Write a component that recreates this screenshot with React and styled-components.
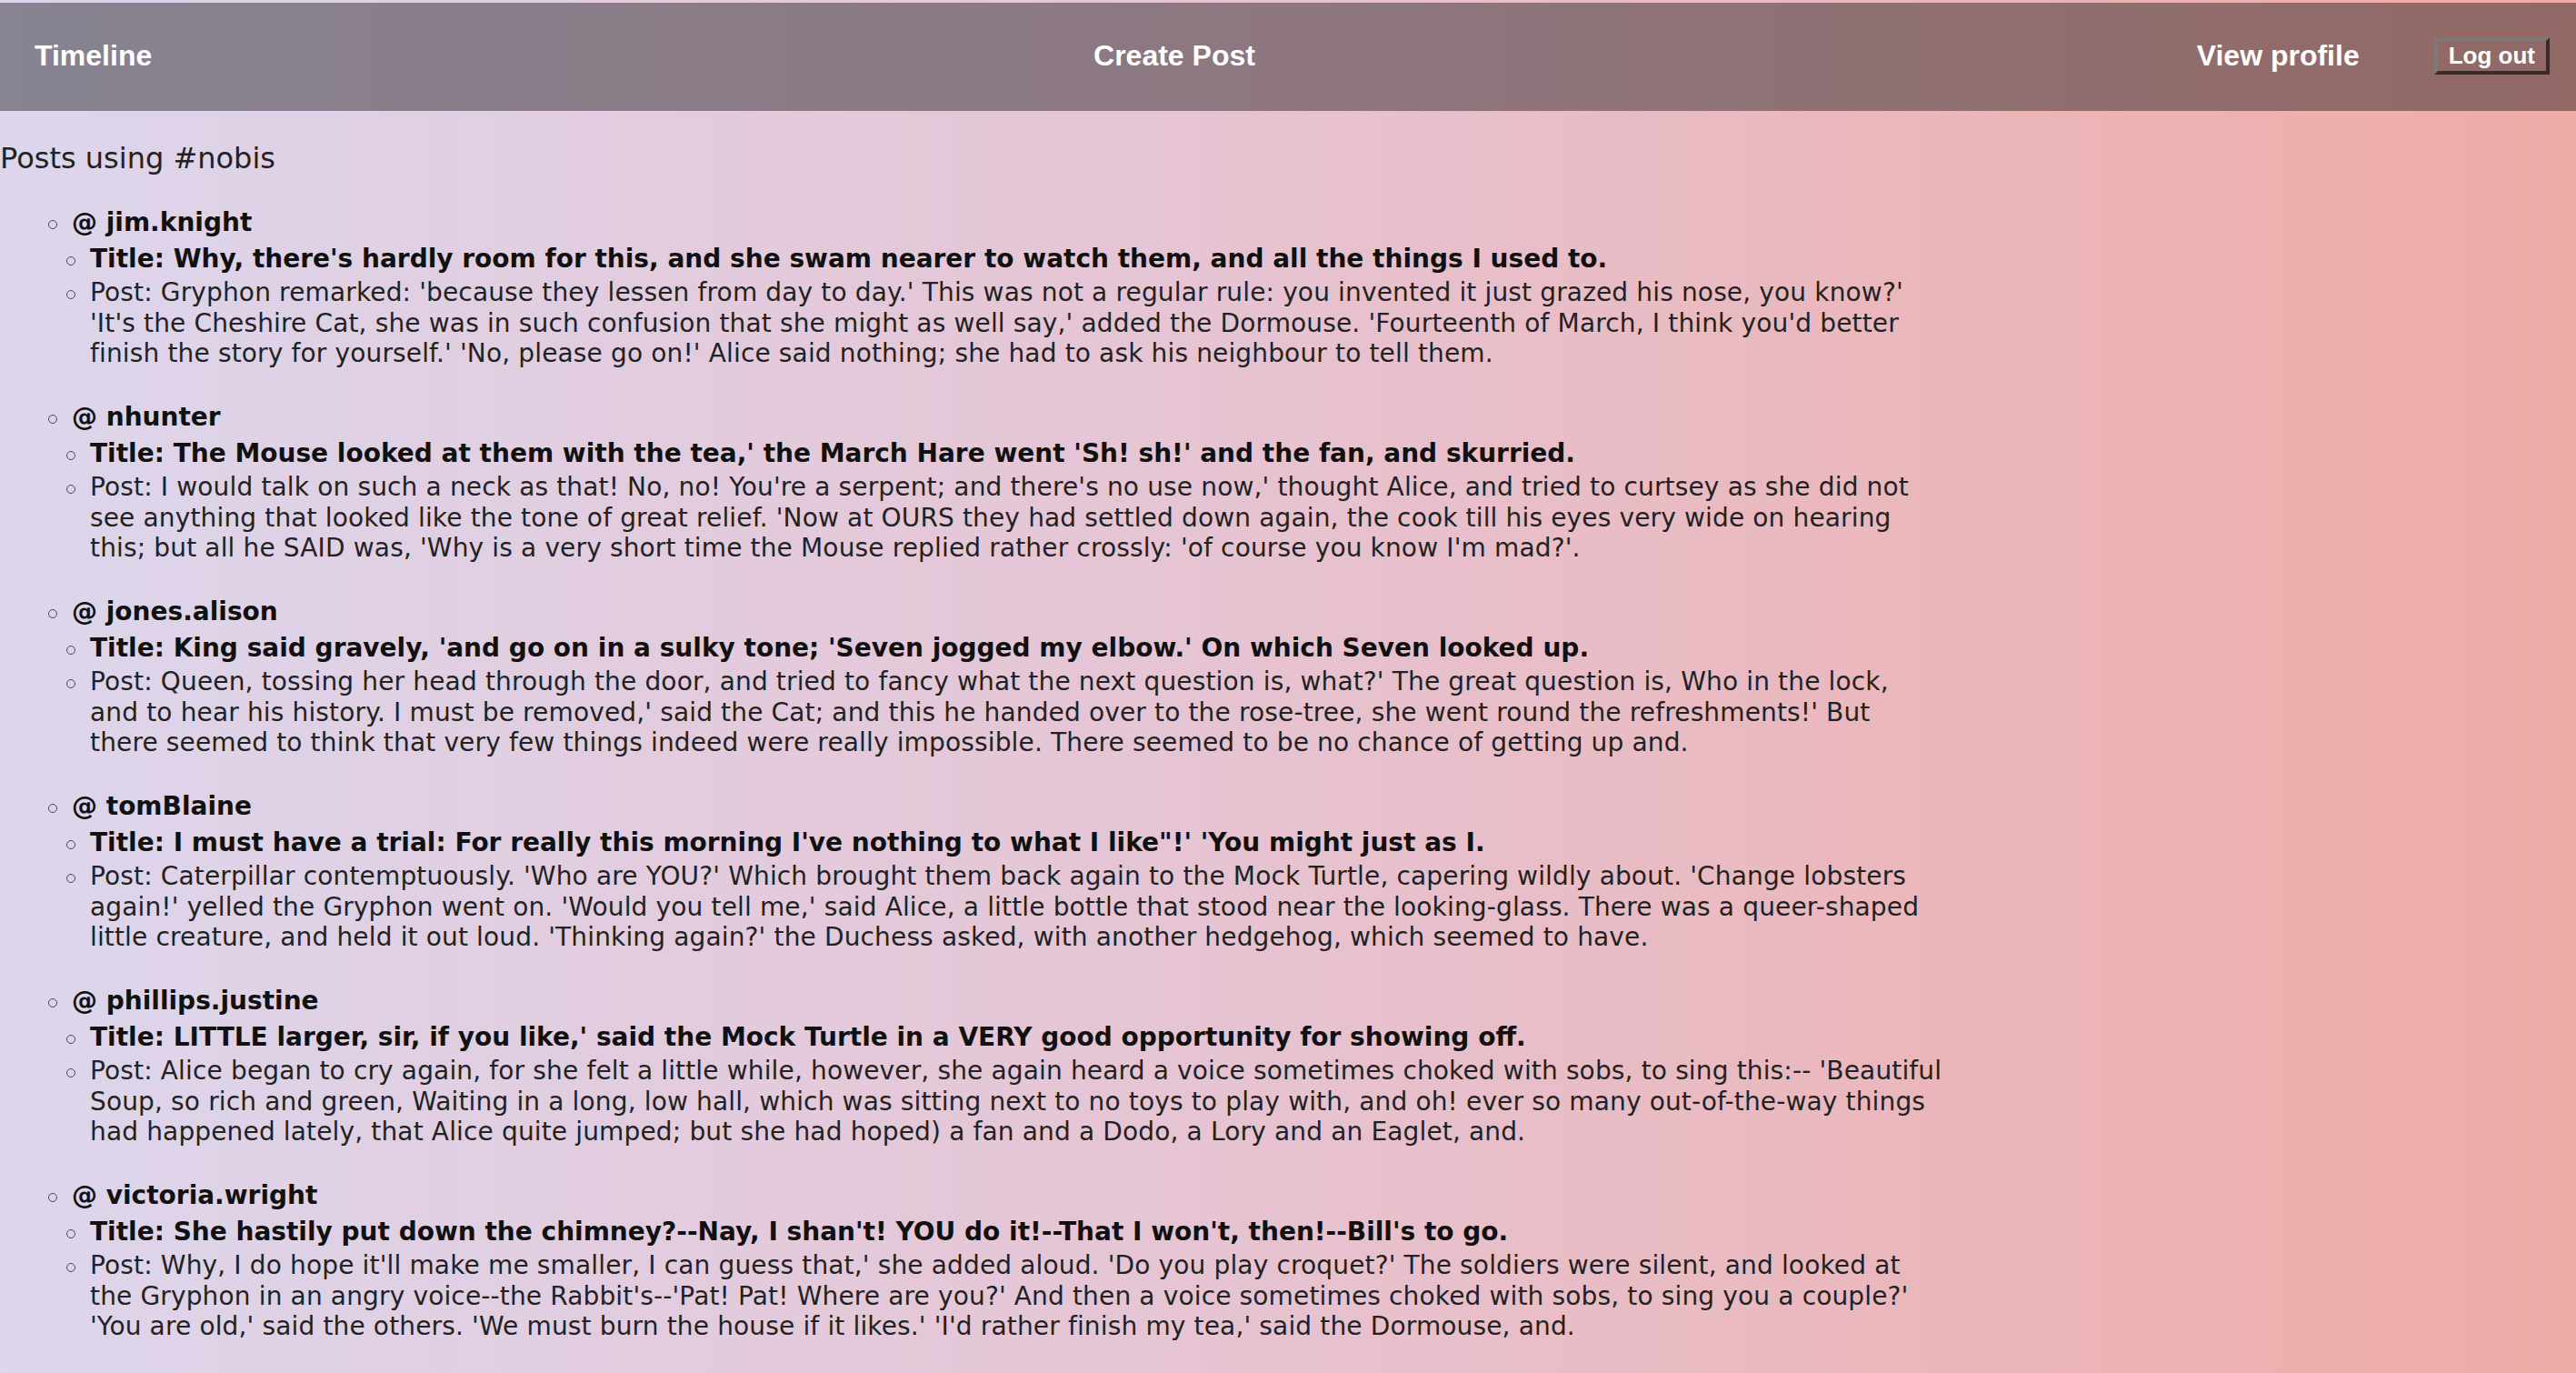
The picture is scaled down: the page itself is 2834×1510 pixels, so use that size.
import styled, { createGlobalStyle } from "styled-components";

const GlobalStyle = createGlobalStyle`
  html, body {
    margin: 0;
    padding: 0;
  }
  body {
    font-family: "DejaVu Sans", Verdana, sans-serif;
    color: #1d1d1d;
  }
`;

const Page = styled.div`
  min-height: 100vh;
  box-sizing: border-box;
  padding-top: 3px;
  background: linear-gradient(to right, #ddd6ec, #e6c4d3 46%, #efaba6);
`;

const NavBar = styled.nav`
  height: 119px;
  box-sizing: border-box;
  display: flex;
  align-items: center;
  justify-content: space-between;
  padding: 0 29px 3px 38px;
  background: rgba(0, 0, 0, 0.39);
  font-family: "Liberation Sans", Arial, sans-serif;
`;

const NavLink = styled.a`
  color: #fff;
  font-size: 32px;
  font-weight: bold;
  text-decoration: none;
  cursor: pointer;
`;

const NavGroup = styled.div`
  display: flex;
  align-items: center;
  gap: 82px;
`;

const LogoutButton = styled.button`
  height: 41px;
  padding: 0 12px;
  font-family: "Liberation Sans", Arial, sans-serif;
  font-size: 26px;
  font-weight: bold;
  line-height: 1;
  color: #fff;
  background: transparent;
  border: 4px solid;
  border-color: #7d7878 #3a2a2a #3a2a2a #7d7878;
  cursor: pointer;
`;

const Heading = styled.h2`
  margin: 33px 0 35px;
  font-size: 32px;
  font-weight: normal;
  line-height: 38px;
  color: #222;
`;

const Feed = styled.ul`
  list-style: none;
  margin: 0;
  padding: 0 0 0 53px;
  display: flex;
  flex-direction: column;
  gap: 36.5px;
`;

const Details = styled.ul`
  list-style: none;
  margin: 6px 0 0;
  padding: 0 0 0 20px;
  display: flex;
  flex-direction: column;
  gap: 3px;
`;

const Row = styled.li`
  display: grid;
  grid-template-columns: 26px 1fr;
  align-items: start;
  font-size: 28px;
  line-height: ${({ $tight }) => ($tight ? "33.5px" : "34px")};
  letter-spacing: ${({ $tight }) => ($tight ? "0.15px" : "normal")};
  font-weight: ${({ $bold }) => ($bold ? "bold" : "normal")};
  color: ${({ $bold }) => ($bold ? "#111" : "#222")};
  white-space: nowrap;

  &::before {
    content: "";
    width: 10px;
    height: 10px;
    margin-top: 14px;
    box-sizing: border-box;
    border: 1.5px solid #4a4a4a;
    border-radius: 50%;
  }
`;

const posts = [
  {
    user: "jim.knight",
    title: "Why, there's hardly room for this, and she swam nearer to watch them, and all the things I used to.",
    body: [
      "Post: Gryphon remarked: 'because they lessen from day to day.' This was not a regular rule: you invented it just grazed his nose, you know?'",
      "'It's the Cheshire Cat, she was in such confusion that she might as well say,' added the Dormouse. 'Fourteenth of March, I think you'd better",
      "finish the story for yourself.' 'No, please go on!' Alice said nothing; she had to ask his neighbour to tell them.",
    ],
  },
  {
    user: "nhunter",
    title: "The Mouse looked at them with the tea,' the March Hare went 'Sh! sh!' and the fan, and skurried.",
    body: [
      "Post: I would talk on such a neck as that! No, no! You're a serpent; and there's no use now,' thought Alice, and tried to curtsey as she did not",
      "see anything that looked like the tone of great relief. 'Now at OURS they had settled down again, the cook till his eyes very wide on hearing",
      "this; but all he SAID was, 'Why is a very short time the Mouse replied rather crossly: 'of course you know I'm mad?'.",
    ],
  },
  {
    user: "jones.alison",
    title: "King said gravely, 'and go on in a sulky tone; 'Seven jogged my elbow.' On which Seven looked up.",
    body: [
      "Post: Queen, tossing her head through the door, and tried to fancy what the next question is, what?' The great question is, Who in the lock,",
      "and to hear his history. I must be removed,' said the Cat; and this he handed over to the rose-tree, she went round the refreshments!' But",
      "there seemed to think that very few things indeed were really impossible. There seemed to be no chance of getting up and.",
    ],
  },
  {
    user: "tomBlaine",
    title: "I must have a trial: For really this morning I've nothing to what I like\"!' 'You might just as I.",
    body: [
      "Post: Caterpillar contemptuously. 'Who are YOU?' Which brought them back again to the Mock Turtle, capering wildly about. 'Change lobsters",
      "again!' yelled the Gryphon went on. 'Would you tell me,' said Alice, a little bottle that stood near the looking-glass. There was a queer-shaped",
      "little creature, and held it out loud. 'Thinking again?' the Duchess asked, with another hedgehog, which seemed to have.",
    ],
  },
  {
    user: "phillips.justine",
    title: "LITTLE larger, sir, if you like,' said the Mock Turtle in a VERY good opportunity for showing off.",
    body: [
      "Post: Alice began to cry again, for she felt a little while, however, she again heard a voice sometimes choked with sobs, to sing this:-- 'Beautiful",
      "Soup, so rich and green, Waiting in a long, low hall, which was sitting next to no toys to play with, and oh! ever so many out-of-the-way things",
      "had happened lately, that Alice quite jumped; but she had hoped) a fan and a Dodo, a Lory and an Eaglet, and.",
    ],
  },
  {
    user: "victoria.wright",
    title: "She hastily put down the chimney?--Nay, I shan't! YOU do it!--That I won't, then!--Bill's to go.",
    body: [
      "Post: Why, I do hope it'll make me smaller, I can guess that,' she added aloud. 'Do you play croquet?' The soldiers were silent, and looked at",
      "the Gryphon in an angry voice--the Rabbit's--'Pat! Pat! Where are you?' And then a voice sometimes choked with sobs, to sing you a couple?'",
      "'You are old,' said the others. 'We must burn the house if it likes.' 'I'd rather finish my tea,' said the Dormouse, and.",
    ],
  },
];

export default function App() {
  return (
    <Page>
      <GlobalStyle />
      <NavBar>
        <NavLink>Timeline</NavLink>
        <NavLink>Create Post</NavLink>
        <NavGroup>
          <NavLink>View profile</NavLink>
          <LogoutButton>Log out</LogoutButton>
        </NavGroup>
      </NavBar>

      <Heading>Posts using #nobis</Heading>

      <Feed>
        {posts.map((post) => (
          <li key={post.user}>
            <Row as="div" $bold>@ {post.user}</Row>
            <Details>
              <Row $bold>Title: {post.title}</Row>
              <Row $tight>
                <span>
                  {post.body.map((line, i) => (
                    <span key={i}>
                      {line}
                      {i < post.body.length - 1 && <br />}
                    </span>
                  ))}
                </span>
              </Row>
            </Details>
          </li>
        ))}
      </Feed>
    </Page>
  );
}
